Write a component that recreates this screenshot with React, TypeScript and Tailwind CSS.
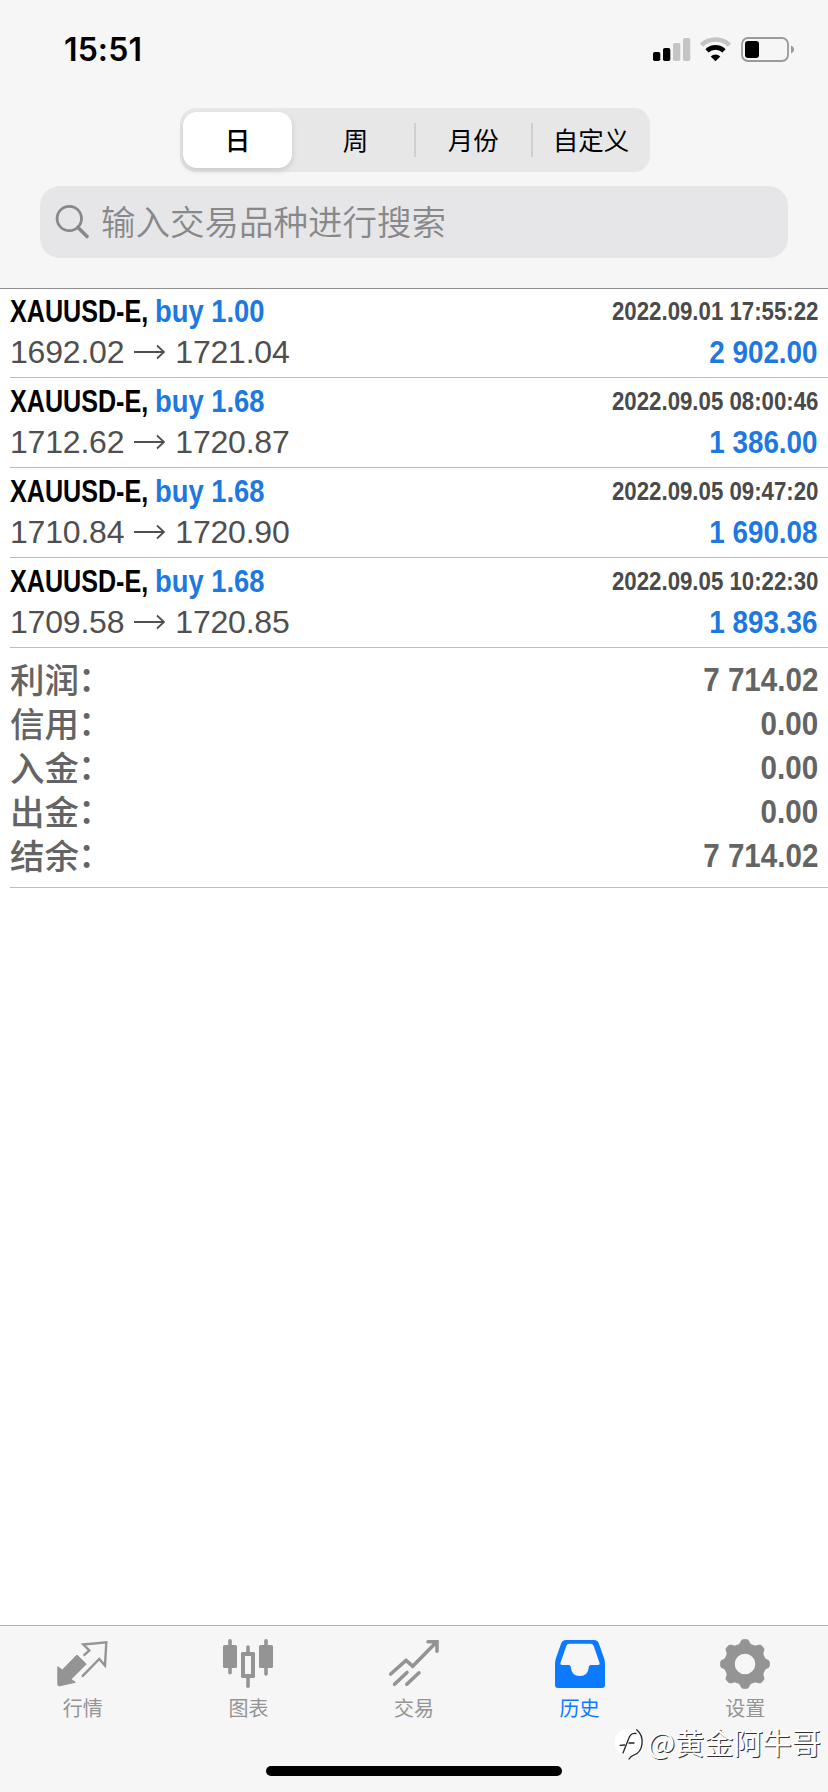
import type { ReactNode } from "react";

type Deal = {
  symbol: string;
  side: string;
  open: string;
  close: string;
  time: string;
  profit: string;
};

const deals: Deal[] = [
  { symbol: "XAUUSD-E,", side: "buy 1.00", open: "1692.02", close: "1721.04", time: "2022.09.01 17:55:22", profit: "2 902.00" },
  { symbol: "XAUUSD-E,", side: "buy 1.68", open: "1712.62", close: "1720.87", time: "2022.09.05 08:00:46", profit: "1 386.00" },
  { symbol: "XAUUSD-E,", side: "buy 1.68", open: "1710.84", close: "1720.90", time: "2022.09.05 09:47:20", profit: "1 690.08" },
  { symbol: "XAUUSD-E,", side: "buy 1.68", open: "1709.58", close: "1720.85", time: "2022.09.05 10:22:30", profit: "1 893.36" },
];

const totals = [
  { label: "利润", value: "7 714.02" },
  { label: "信用", value: "0.00" },
  { label: "入金", value: "0.00" },
  { label: "出金", value: "0.00" },
  { label: "结余", value: "7 714.02" },
];

const periods = ["日", "周", "月份", "自定义"];

const StatusBar = () => (
  <div className="flex h-[108px] items-start justify-between pl-[64px] pr-[33px] pt-[30px]">
    <span className="font-['Inter'] text-[32px] font-semibold leading-[40px] tracking-[0.1px] text-black">15:51</span>
    <svg className="mt-[6px] h-[28px] w-[144px]" viewBox="0 0 144 28">
      <rect x="2" y="16" width="7.3" height="9" rx="1.8" fill="#000" />
      <rect x="12" y="12" width="7.3" height="13" rx="1.8" fill="#000" />
      <rect x="22" y="7" width="7.3" height="18" rx="1.8" fill="#c4c4c4" />
      <rect x="32" y="2" width="7.3" height="23" rx="1.8" fill="#c4c4c4" />
      <path d="M50.5 9.2a20 20 0 0 1 28 0" fill="none" stroke="#c4c4c4" strokeWidth="4.6" />
      <path d="M56 14.8a12.2 12.2 0 0 1 17 0" fill="none" stroke="#000" strokeWidth="4.6" />
      <path d="M64.5 25.2l-4.8-4.8a7 7 0 0 1 9.6 0z" fill="#000" />
      <rect x="91" y="2" width="46" height="23" rx="6" fill="none" stroke="#9a9a9a" strokeWidth="1.8" />
      <rect x="94" y="5" width="14" height="17" rx="3" fill="#000" />
      <path d="M140 9.5c2 .8 3 2.300 3 4s-1 3.200-3 4z" fill="#9a9a9a" />
    </svg>
  </div>
);

const PeriodSwitch = () => (
  <div className="ml-[180px] flex h-[64px] w-[470px] items-center rounded-[16px] bg-[#e7e7e8] pl-[3px]">
    {periods.map((period, i) =>
      i === 0 ? (
        <div key={period} className="flex w-[114px]">
          <div className="flex h-[56px] w-[109px] items-center justify-center rounded-[14px] bg-white pb-[2px] text-[25.5px] font-medium shadow-[0_3px_6px_rgba(0,0,0,0.13)]">
            {period}
          </div>
        </div>
      ) : (
        <div key={period} className="flex w-[118px] items-center">
          <span className="flex-1 pb-[2px] text-center text-[25.5px]">{period}</span>
          {i < 3 && <div className="-mx-[1px] h-[34px] w-[2px] bg-[#cfcfd1]" />}
        </div>
      )
    )}
  </div>
);

const SearchField = () => (
  <div className="mx-[40px] mt-[14px] flex h-[72px] items-center rounded-[20px] bg-[#e6e6e8] pl-[15px] text-[#88888b]">
    <svg className="h-[36px] w-[36px]" viewBox="0 0 36 36" fill="none" stroke="currentColor">
      <circle cx="14.3" cy="14.5" r="12.2" strokeWidth="2.8" />
      <path d="M23 23.5l9 9" strokeWidth="3.6" strokeLinecap="round" />
    </svg>
    <span className="ml-[10px] pb-[5px] text-[34.5px] font-[350] leading-[40px]">输入交易品种进行搜索</span>
  </div>
);

const DealRow = ({ deal }: { deal: Deal }) => (
  <div className="ml-[10px] h-[90px] border-b border-[#bcbcbf] pr-[10px] font-['Liberation_Sans']">
    <div className="flex h-[44px] items-center justify-between pt-[1px] font-bold">
      <div className="flex whitespace-nowrap text-[32px]">
        <span className="w-[145px] origin-left scale-x-[0.785] text-black">{deal.symbol}</span>
        <span className="origin-left scale-x-[0.855] text-[#1d78e0]">{deal.side}</span>
      </div>
      <span className="origin-right scale-x-[0.855] pt-[1px] text-[26px] text-[#4a4a4a]">{deal.time}</span>
    </div>
    <div className="flex h-[39px] items-center justify-between">
      <div className="flex items-center text-[32px] text-[#4f4f4f]">
        <span className="tracking-[-0.2px]">{deal.open}</span>
        <svg className="mx-[10px] h-[16px] w-[31px]" viewBox="0 0 31 16" fill="none" stroke="currentColor" strokeWidth="1.8">
          <path d="M0 8h30M23 1.5l7 6.500-7 6.500" />
        </svg>
        <span className="tracking-[-0.2px]">{deal.close}</span>
      </div>
      <span className="origin-right scale-x-[0.87] text-[32px] font-bold text-[#1d78e0]">{deal.profit}</span>
    </div>
  </div>
);

const Totals = () => (
  <div className="ml-[10px] h-[240px] border-b border-[#bcbcbf] pr-[10px] pt-[9px] text-[#646464]">
    {totals.map((row) => (
      <div key={row.label} className="flex h-[44px] items-center justify-between">
        <div className="flex items-center pb-[2px] text-[34.5px] font-medium leading-[42px]">
          <span>{row.label}</span>
          <span className="-ml-[1px] pb-[4px] leading-[38px]">：</span>
        </div>
        <span className="origin-right scale-x-[0.87] pt-[1px] font-['Liberation_Sans'] text-[34px] font-bold">{row.value}</span>
      </div>
    ))}
  </div>
);

// Eight-tooth cog outline with flattened teeth
const gearPoints = Array.from({ length: 240 }, (_, i) => {
  const a = (i / 240) * Math.PI * 2;
  const r = 22.8 + 2.2 * Math.tanh(1.8 * Math.cos(8 * a));
  return `${(25 + r * Math.sin(a)).toFixed(2)} ${(26 - r * Math.cos(a)).toFixed(2)}`;
}).join("L");

const QuotesIcon = () => (
  <g transform="translate(-0.7 0)">
    <path d="M.5 28.7L5 32 19.7 17 29 26 13.7 41.3 18 44.3 1.5 48 .5 46.7z" fill="currentColor" stroke="currentColor" strokeLinejoin="round" />
    <path d="M24.7 38.7L42 21l5.700 6.500L49 4.300 26 6.500l6 6-5.700 5.200" fill="none" stroke="currentColor" strokeWidth="2.4" />
  </g>
);

const ChartIcon = () => (
  <g fill="currentColor">
    <rect x="0" y="7" width="14" height="23" rx="1.5" />
    <rect x="5.2" y="1" width="3.6" height="35.5" rx="1.8" />
    <path fillRule="evenodd" d="M19.5 14h11a1.5 1.5 0 0 1 1.5 1.5v23a1.5 1.5 0 0 1-1.5 1.5h-11a1.5 1.5 0 0 1-1.5-1.5v-23a1.5 1.5 0 0 1 1.5-1.5zM22 18v18h6V18z" />
    <rect x="23.2" y="7.3" width="3.6" height="9" rx="1.8" />
    <rect x="23.2" y="38" width="3.6" height="12" rx="1.8" />
    <rect x="36" y="7" width="14" height="23" rx="1.5" />
    <rect x="41.2" y="1" width="3.6" height="36.7" rx="1.8" />
  </g>
);

const TradeIcon = () => (
  <path
    d="M1.7 36L17 22.5l6.700 5.700L47.500 4M39 3.700h9v9.500M5.500 46.300L18 34.500M17.800 46.300L30 34.800"
    fill="none"
    stroke="currentColor"
    strokeWidth="3.6"
    strokeLinecap="round"
  />
);

const HistoryIcon = () => (
  <path
    fill="currentColor"
    fillRule="evenodd"
    d="M11 2h28q3.500 0 4.700 3L49 20q1 3 1 6v21q0 3-3 3H3q-3 0-3-3V26q0-3 1-6L6.300 5Q7.500 2 11 2zM14.500 5.700q-2.300 0-3.200 2.300L5.600 24.500Q4.800 27 7 27h7q1.700 0 1.900 2.500Q16.500 38 24.800 38t8.900-8.500Q34 27 35.600 27H43q2.200 0 1.400-2.500L38.700 8q-.9-2.300-3.200-2.300z"
  />
);

const SettingsIcon = () => (
  <path fill="currentColor" fillRule="evenodd" d={`M${gearPoints}ZM25 15.7a10.3 10.3 0 1 0 0 20.6a10.3 10.3 0 1 0 0-20.6z`} />
);

const tabs: { label: string; icon: ReactNode; active?: boolean }[] = [
  { label: "行情", icon: <QuotesIcon /> },
  { label: "图表", icon: <ChartIcon /> },
  { label: "交易", icon: <TradeIcon /> },
  { label: "历史", icon: <HistoryIcon />, active: true },
  { label: "设置", icon: <SettingsIcon /> },
];

const TabBar = () => (
  <div className="relative flex h-[167px] flex-col border-t border-[#b2b2b4] bg-[#f6f6f6]">
    <div className="flex h-[140px] pt-[12px]">
      {tabs.map((tab) => (
        <div key={tab.label} className={tab.active ? "flex flex-1 flex-col items-center text-[#0b7aff]" : "flex flex-1 flex-col items-center text-[#949494]"}>
          <svg className="h-[52px] w-[50px] overflow-visible" viewBox="0 0 50 52">
            {tab.icon}
          </svg>
          <span className="mt-[6px] text-[20px] leading-[24px]">{tab.label}</span>
        </div>
      ))}
    </div>
    <div className="mx-auto h-[10px] w-[296px] rounded-full bg-black" />
    <Watermark />
  </div>
);

const Watermark = () => (
  <div className="absolute right-[7px] top-[96px] flex items-center text-white">
    <svg className="h-[38px] w-[33px]" viewBox="0 0 33 38" strokeLinecap="round">
      <circle cx="14" cy="20" r="13.5" fill="#fff" />
      <path d="M22.500 7.500Q30 12 28.500 22T15 37V10z" fill="#fff" />
      <path d="M22.700 7.800Q29 13 28 22 27 30.500 20 33q-3 1-5 4" fill="none" stroke="#222" strokeWidth="1.300" />
      <path d="M22 11.500q-5.500-1-7.500 5.500L9 31M6 23.300l4.500-.3M15 21h5" fill="none" stroke="#222" strokeWidth="1.300" />
    </svg>
    <span className="text-[29.2px] leading-[34px] [text-shadow:1px_1px_0_#333]">@黄金阿牛哥</span>
  </div>
);

const App = () => {
  return (
    <div className="flex h-[1792px] w-[828px] flex-col overflow-hidden bg-white font-['Noto_Sans_CJK_SC',sans-serif] text-black">
      <div className="h-[289px] border-b border-[#8f8f92] bg-[#f6f6f6]">
        <StatusBar />
        <PeriodSwitch />
        <SearchField />
      </div>
      <div className="-mt-px flex-1">
        {deals.map((deal) => (
          <DealRow key={deal.time} deal={deal} />
        ))}
        <Totals />
      </div>
      <TabBar />
    </div>
  );
};

export default App;
